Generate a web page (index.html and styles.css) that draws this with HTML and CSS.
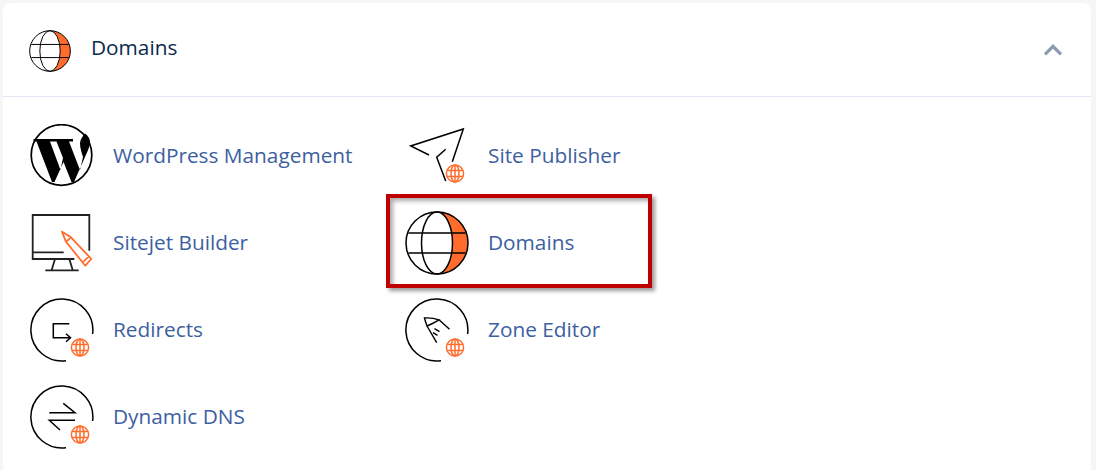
FILE: index.html
```html
<!DOCTYPE html>
<html lang="en">
<head>
    <meta charset="UTF-8">
    <title>Domains</title>
    <link rel="stylesheet" href="styles.css">
</head>
<body>
    <svg class="defs" width="0" height="0">
        <symbol id="big-globe" viewBox="0 0 64 64">
            <path d="M32 1A31 31 0 0 1 32 63A15.5 31 0 0 0 32 1Z" fill="#ff6c2c"/>
            <g fill="none" stroke="#000" stroke-width="1.5">
                <circle cx="32" cy="32" r="31"/>
                <ellipse cx="32" cy="32" rx="15.5" ry="31"/>
                <path d="M3.5 22H60.5M3.5 42H60.5"/>
            </g>
        </symbol>
        <symbol id="mini-globe" viewBox="0 0 64 64">
            <g fill="none" stroke="#ff6c2c" stroke-width="1.5">
                <circle cx="50" cy="49.5" r="8.6" fill="#fff"/>
                <ellipse cx="50" cy="49.5" rx="4" ry="8.6"/>
                <path d="M50 41V58M42.2 46.5H57.8M42.2 52.5H57.8"/>
            </g>
        </symbol>
        <symbol id="ring" viewBox="0 0 64 64">
            <path d="M62.6 36A31 31 0 1 0 36 62.7" fill="none" stroke="#000" stroke-width="1.5"/>
        </symbol>
        <symbol id="wp" viewBox="0 0 64 64">
            <circle cx="31.5" cy="31" r="30.3" fill="none" stroke="#000" stroke-width="1.7"/>
            <path fill="#000" d="M3.5 15H26V17.5H20L30.5 46L33 34L26.5 17.5H24V15H43V17.5H39L50 46L53 33C51.5 28 50 24 50 19.5C50 15.5 52.5 12.5 55 9.5C58.5 12 60.3 15 60 19C59.8 23 57 28.5 55 33L44 58H41.5L33.5 38L24.5 58H22L6.5 17.5H3.5Z"/>
        </symbol>
    </svg>

    <section class="panel">
        <header class="panel-head">
            <svg class="head-icon"><use href="#big-globe"/></svg>
            <h2>Domains</h2>
            <svg class="chevron" viewBox="0 0 20 12"><path d="M2 10.3L10 2.3L18 10.3" fill="none" stroke="#8d9bb0" stroke-width="3.2"/></svg>
        </header>

        <div class="items">
            <a class="item" href="#">
                <svg class="icon"><use href="#wp"/></svg>
                <span>WordPress Management</span>
            </a>
            <a class="item" href="#">
                <svg class="icon" viewBox="0 0 64 64">
                    <path d="M47.3 37.7L58.3 5L5.7 22L24 31M40.7 25.3L31.7 33.3L40.7 57" fill="none" stroke="#000" stroke-width="1.5"/>
                    <use href="#mini-globe"/>
                </svg>
                <span>Site Publisher</span>
            </a>
            <a class="item" href="#">
                <svg class="icon" viewBox="0 0 64 64">
                    <path d="M59.3 39.7V4H2.7V48H44.3M2.7 41.3H33.7M25 48L21.7 59M39.3 48L42.7 59M15.3 59.3H48.7" fill="none" stroke="#222" stroke-width="1.8"/>
                    <path d="M32 20.7L41 26.3L61.3 48L55.3 54.7L36 30.8ZM41 26.3L36 30.8M58.7 45.4L52.4 51.6" fill="#fff" stroke="#ff6c2c" stroke-width="1.8" stroke-linejoin="round"/>
                </svg>
                <span>Sitejet Builder</span>
            </a>
            <a class="item" href="#">
                <svg class="icon"><use href="#big-globe"/></svg>
                <span>Domains</span>
            </a>
            <a class="item" href="#">
                <svg class="icon" viewBox="0 0 64 64">
                    <use href="#ring"/>
                    <path d="M39.3 25.7H23.3V39.7H40M36 35.7L40.5 39.7L36 43.7" fill="none" stroke="#000" stroke-width="1.5"/>
                    <use href="#mini-globe"/>
                </svg>
                <span>Redirects</span>
            </a>
            <a class="item" href="#">
                <svg class="icon" viewBox="0 0 64 64">
                    <use href="#ring"/>
                    <path d="M19.5 20Q27 19.5 34 21.8Q29 25 22 28Q20.5 24 19.5 20ZM34 21.8L44.5 31.3M22 28L31.7 44.7M29.5 30.7L34.5 33.7M28 34.7L32.5 37.3" fill="none" stroke="#000" stroke-width="1.4"/>
                    <use href="#mini-globe"/>
                </svg>
                <span>Zone Editor</span>
            </a>
            <a class="item" href="#">
                <svg class="icon" viewBox="0 0 64 64">
                    <use href="#ring"/>
                    <path d="M19.3 27.7H45L33.3 18.3M45 35.3H19.3L30 45" fill="none" stroke="#000" stroke-width="1.5"/>
                    <use href="#mini-globe"/>
                </svg>
                <span>Dynamic DNS</span>
            </a>
        </div>

        <div class="callout"></div>
    </section>
</body>
</html>
```

FILE: styles.css
```css
html, body {
    height: 100%;
}

body {
    margin: 0;
    padding: 3px 5px 0 3px;
    box-sizing: border-box;
    background: #f6f6f6;
    font-family: 'Open Sans', sans-serif;
    overflow: hidden;
}

.defs {
    position: absolute;
}

.panel {
    position: relative;
    height: 100%;
    background: #fff;
    border-radius: 8px 8px 0 0;
}

.panel-head {
    display: flex;
    align-items: center;
    height: 93px;
    padding: 0 28px 0 26px;
    border-bottom: 1px solid #e3e8f5;
}

.head-icon {
    width: 42px;
    height: 42px;
    margin-top: 2px;
}

.panel-head h2 {
    flex: 1;
    margin: 0 0 5px 20px;
    font-size: 20.8px;
    font-weight: 400;
    color: #0b2a4d;
}

.chevron {
    width: 20px;
    height: 12px;
}

.items {
    display: grid;
    grid-template-columns: repeat(2, 375px);
    grid-auto-rows: 87px;
    padding: 15px 0 0 27px;
}

.item {
    display: flex;
    align-items: center;
    gap: 19px;
    color: #3d5f9f;
    font-size: 20.8px;
    line-height: 28px;
    text-decoration: none;
}

.item span {
    margin-bottom: 2px;
}

.icon {
    flex: none;
    width: 64px;
    height: 64px;
}

.callout {
    position: absolute;
    left: 383px;
    top: 191px;
    width: 266px;
    height: 94px;
    box-sizing: border-box;
    border: 4px solid #bf0000;
    box-shadow: 3px 3px 4px #999, inset 3px 3px 4px #aaa;
}
```
